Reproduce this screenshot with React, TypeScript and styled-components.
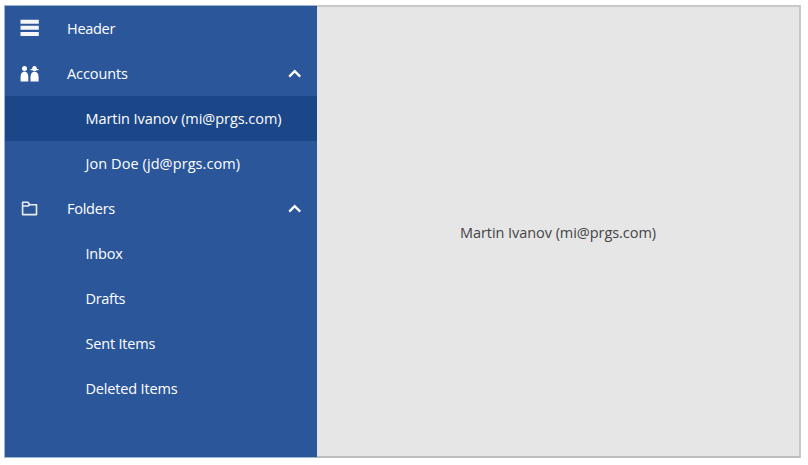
import React from 'react';
import styled, { createGlobalStyle } from 'styled-components';

const GlobalStyle = createGlobalStyle`
  * { box-sizing: border-box; }
  body {
    margin: 0;
    background: #fff;
    font-family: "Open Sans", "Noto Sans", sans-serif;
    font-size: 14.5px;
  }
`;

const Frame = styled.div`
  display: flex;
  width: 797px;
  height: 453px;
  margin: 5px 0 0 4px;
`;

const Sidebar = styled.nav`
  width: 313px;
  border: 1px solid #9db4d3;
  border-right: 0;
  background: #2b579a;
  color: #fff;
`;

const Row = styled.div<{ $selected?: boolean }>`
  display: flex;
  align-items: center;
  height: 45px;
  padding: 0 15px;
  background: ${(p) => (p.$selected ? '#1b4688' : 'transparent')};
`;

const IconSlot = styled.span`
  display: flex;
  width: 47px;
  flex: none;
`;

const Label = styled.span<{ $spacing: number; $nested?: boolean }>`
  margin-left: ${(p) => (p.$nested ? '65.5px' : '0')};
  letter-spacing: ${(p) => p.$spacing}px;
  line-height: 20px;
  white-space: nowrap;
`;

const Chevron = styled.svg`
  margin-left: auto;
`;

const Content = styled.main`
  display: flex;
  flex: 1;
  align-items: center;
  justify-content: center;
  padding-top: 2px;
  border: 2px solid #c8c8c8;
  border-left: 0;
  border-bottom-color: #bdbdbd;
  background: #e6e6e6;
  color: #444;
`;

const BarsIcon = () => (
  <svg width="20" height="20" viewBox="0 0 20 20" fill="#f4f6fa">
    <path d="M.5 .7h18.3v4H.5zM.5 6.8h18.3v4H.5zM.5 13h18.3v4H.5z" />
  </svg>
);

const PeopleIcon = () => (
  <svg width="20" height="20" viewBox="0 0 20 20" fill="#fff">
    <circle cx="4.5" cy="4.4" r="2.5" />
    <path d="M.6 17.4v-4.4c0-3.4 1.5-5.5 3.9-5.5s3.8 2.1 3.8 5.5v4.4z" />
    <path d="M10.6 5h1.5c.1-2 .9-3.1 2.4-3.1s2.3 1.1 2.4 3.1h1.5v1.3h-1.8c-.5.6-1.2.9-2.1.9s-1.6-.3-2.1-.9h-1.8z" />
    <path d="M10.5 17.4v-4.4c0-3.4 1.6-5.3 4-5.3s4.1 1.9 4.1 5.3v4.4z" />
  </svg>
);

const FolderIcon = () => (
  <svg width="20" height="20" viewBox="0 0 20 20" fill="none" stroke="#e9eef6" strokeWidth="1.6" strokeLinejoin="round">
    <path d="M2.6 15.6V3.2h5.2l2.1 2.6h6.6v9.8zM2.8 7h5l1.9-1.2" />
  </svg>
);

const ICONS = { bars: BarsIcon, people: PeopleIcon, folder: FolderIcon };

type Item = {
  text: string;
  spacing: number;
  icon?: keyof typeof ICONS;
  expanded?: boolean;
  selected?: boolean;
};

const items: Item[] = [
  { text: 'Header', spacing: -0.3, icon: 'bars' },
  { text: 'Accounts', spacing: -0.1, icon: 'people', expanded: true },
  { text: 'Martin Ivanov (mi@prgs.com)', spacing: -0.06, selected: true },
  { text: 'Jon Doe (jd@prgs.com)', spacing: 0.08 },
  { text: 'Folders', spacing: -0.25, icon: 'folder', expanded: true },
  { text: 'Inbox', spacing: -0.2 },
  { text: 'Drafts', spacing: -0.3 },
  { text: 'Sent Items', spacing: -0.2 },
  { text: 'Deleted Items', spacing: -0.17 },
];

export default function App() {
  return (
    <>
      <GlobalStyle />
      <Frame>
        <Sidebar>
          {items.map((item) => {
            const Icon = item.icon && ICONS[item.icon];
            return (
              <Row key={item.text} $selected={item.selected}>
                {Icon && <IconSlot><Icon /></IconSlot>}
                <Label $spacing={item.spacing} $nested={!Icon}>{item.text}</Label>
                {item.expanded && (
                  <Chevron width="14" height="10" viewBox="0 0 14 10" fill="none" stroke="#fff" strokeWidth="2.2">
                    <path d="M1.2 7.6 6.7 2.1 12.2 7.6" />
                  </Chevron>
                )}
              </Row>
            );
          })}
        </Sidebar>
        <Content>
          <Label $spacing={-0.06}>Martin Ivanov (mi@prgs.com)</Label>
        </Content>
      </Frame>
    </>
  );
}
